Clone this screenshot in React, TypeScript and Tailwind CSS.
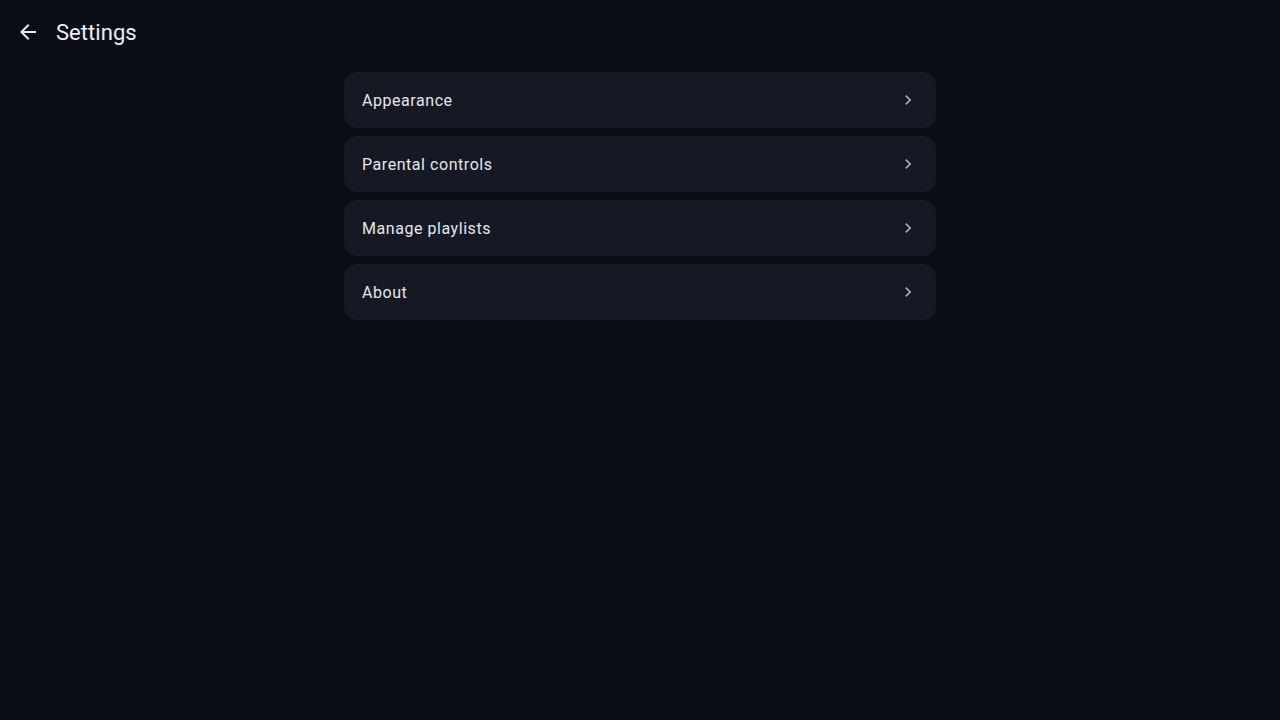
import React from "react";

const items = ["Appearance", "Parental controls", "Manage playlists", "About"];

export default function App() {
  return (
    <div
      className="w-[1280px] h-[720px] bg-[#0b0e16] text-[#e4e6ec] overflow-hidden"
      style={{ fontFamily: "Roboto, 'Liberation Sans', sans-serif" }}
    >
      <div className="h-16 flex items-center pl-4">
        <svg width="24" height="24" viewBox="0 0 24 24" fill="#e8eaf0">
          <path d="M20 11H7.83l5.59-5.59L12 4l-8 8 8 8 1.41-1.41L7.83 13H20v-2z" />
        </svg>
        <span className="ml-4 text-[22px] tracking-[0.05px] text-[#eceef3]">Settings</span>
      </div>
      <div className="w-[592px] mx-auto mt-2 flex flex-col gap-2">
        {items.map((t) => (
          <div
            key={t}
            className="h-14 rounded-xl bg-[#151923] flex items-center justify-between pl-[18px] pr-[18px]"
          >
            <span className="pt-[2px] text-base tracking-[0.55px] text-[#e4e6ec]">{t}</span>
            <svg width="20" height="20" viewBox="0 0 24 24" fill="#a4a9b4">
              <path d="M10 6L8.59 7.41 13.17 12l-4.58 4.59L10 18l6-6z" />
            </svg>
          </div>
        ))}
      </div>
    </div>
  );
}
